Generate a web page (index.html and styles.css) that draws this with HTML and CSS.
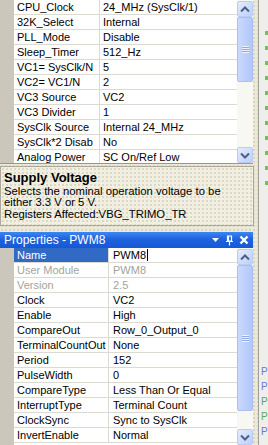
FILE: index.html
```html
<!DOCTYPE html>
<html lang="en">
<head>
  <meta charset="UTF-8">
  <title>Properties - PWM8</title>
  <link rel="stylesheet" href="styles.css">
</head>
<body>

  <div class="layout">
    <div class="main">

      <!-- Global resources grid -->
      <div class="panel top-panel">
        <div class="grid">
          <div class="row"><span class="name">CPU_Clock</span><span class="value">24_MHz (SysClk/1)</span></div>
          <div class="row"><span class="name">32K_Select</span><span class="value">Internal</span></div>
          <div class="row"><span class="name">PLL_Mode</span><span class="value">Disable</span></div>
          <div class="row"><span class="name">Sleep_Timer</span><span class="value">512_Hz</span></div>
          <div class="row"><span class="name">VC1= SysClk/N</span><span class="value">5</span></div>
          <div class="row"><span class="name">VC2= VC1/N</span><span class="value">2</span></div>
          <div class="row"><span class="name">VC3 Source</span><span class="value">VC2</span></div>
          <div class="row"><span class="name">VC3 Divider</span><span class="value">1</span></div>
          <div class="row"><span class="name">SysClk Source</span><span class="value">Internal 24_MHz</span></div>
          <div class="row"><span class="name">SysClk*2 Disab</span><span class="value">No</span></div>
          <div class="row"><span class="name">Analog Power</span><span class="value">SC On/Ref Low</span></div>
        </div>
        <div class="vscroll">
          <div class="sbtn"><svg width="10" height="7" viewBox="0 0 10 7"><path d="M1 5.5 L5 1.5 L9 5.5" fill="none" stroke="#4d6185" stroke-width="2"/></svg></div>
          <div class="thumb top-thumb"><span class="grip"></span></div>
          <div class="track"></div>
          <div class="sbtn"><svg width="10" height="7" viewBox="0 0 10 7"><path d="M1 1.5 L5 5.5 L9 1.5" fill="none" stroke="#4d6185" stroke-width="2"/></svg></div>
        </div>
      </div>

      <!-- Description -->
      <div class="desc">
        <div class="desc-title">Supply Voltage</div>
        <div class="desc-text">Selects the nominal operation voltage to be<br>either 3.3 V or 5 V.</div>
        <div class="desc-text">Registers Affected:VBG_TRIMO_TR</div>
      </div>

      <!-- Properties window -->
      <div class="titlebar">
        <span class="title">Properties - PWM8</span>
        <span class="title-icons">
          <svg width="9" height="6" viewBox="0 0 9 6"><path d="M1 1 L8 1 L4.5 5 Z" fill="#fff"/></svg>
          <svg width="9" height="11" viewBox="0 0 9 11"><path d="M2.5 1 H6.5 V6 H2.5 Z M3.5 1 V6 M1 6.5 H8 M4.5 7 V10.5" fill="none" stroke="#fff" stroke-width="1.2"/></svg>
          <svg width="10" height="10" viewBox="0 0 10 10"><path d="M1.5 1.5 L8.5 8.5 M8.5 1.5 L1.5 8.5" stroke="#fff" stroke-width="2.4"/></svg>
        </span>
      </div>

      <div class="panel bottom-panel">
        <div class="grid wide">
          <div class="row"><span class="name selected">Name</span><span class="value">PWM8<span class="caret"></span></span></div>
          <div class="row muted"><span class="name">User Module</span><span class="value">PWM8</span></div>
          <div class="row muted"><span class="name">Version</span><span class="value">2.5</span></div>
          <div class="row"><span class="name">Clock</span><span class="value">VC2</span></div>
          <div class="row"><span class="name">Enable</span><span class="value">High</span></div>
          <div class="row"><span class="name">CompareOut</span><span class="value">Row_0_Output_0</span></div>
          <div class="row"><span class="name">TerminalCountOut</span><span class="value">None</span></div>
          <div class="row"><span class="name">Period</span><span class="value">152</span></div>
          <div class="row"><span class="name">PulseWidth</span><span class="value">0</span></div>
          <div class="row"><span class="name">CompareType</span><span class="value">Less Than Or Equal</span></div>
          <div class="row"><span class="name">InterruptType</span><span class="value">Terminal Count</span></div>
          <div class="row"><span class="name">ClockSync</span><span class="value">Sync to SysClk</span></div>
          <div class="row"><span class="name">InvertEnable</span><span class="value">Normal</span></div>
        </div>
        <div class="vscroll">
          <div class="sbtn"><svg width="10" height="7" viewBox="0 0 10 7"><path d="M1 5.5 L5 1.5 L9 5.5" fill="none" stroke="#4d6185" stroke-width="2"/></svg></div>
          <div class="thumb bottom-thumb"><span class="grip"></span></div>
          <div class="track"></div>
          <div class="sbtn"><svg width="10" height="7" viewBox="0 0 10 7"><path d="M1 1.5 L5 5.5 L9 1.5" fill="none" stroke="#4d6185" stroke-width="2"/></svg></div>
        </div>
      </div>
    </div>

    <!-- Neighbouring window edge -->
    <div class="side">
      <div class="side-list">
        <i></i><i></i><i></i><i></i><i></i><i></i><i></i><i></i><i></i><i></i><i></i>
      </div>
      <div class="side-letters">
        <span class="blue">P</span><span class="blue">P</span><span class="green">P</span><span class="green">P</span><span class="blue">P</span>
      </div>
    </div>
  </div>

</body>
</html>
```

FILE: styles.css
```css
body {
  margin: 0;
  width: 268px;
  height: 445px;
  overflow: hidden;
  font-family: "Liberation Sans", Arial, sans-serif;
  font-size: 11px;
  color: #000;
  background-color: #ece9d8;
  background-image: radial-gradient(#d9d5c2 0.7px, transparent 0.9px);
  background-size: 4px 4px;
}

.layout {
  display: flex;
  height: 445px;
}

.main {
  width: 253px;
  display: flex;
  flex-direction: column;
}

/* property grid panels */
.panel {
  display: flex;
  background: #fff;
  overflow: hidden;
}

.top-panel {
  height: 163px;
  border-bottom: 1px solid #9a9789;
}

.bottom-panel {
  height: 197px;
}

.grid {
  width: 237px;
  background: linear-gradient(to right, #cbc7bd 14px, #fff 14px);
}

.row {
  display: flex;
  height: 14px;
  line-height: 14px;
  margin-left: 14px;
  border-bottom: 1px solid #dcdad2;
  white-space: nowrap;
}

.name {
  width: 82px;
  padding-left: 3px;
  border-right: 1px solid #dcdad2;
  overflow: hidden;
}

.wide .name {
  width: 91px;
}

.value {
  flex: 1;
  padding-left: 3px;
  overflow: hidden;
}

.wide .value {
  padding-left: 4px;
}

.name.selected {
  background: #316ac5;
  color: #fff;
}

.muted {
  color: #a4a39c;
}

.caret {
  display: inline-block;
  width: 1px;
  height: 12px;
  background: #000;
  vertical-align: -2px;
  margin-left: 1px;
}

/* XP style scrollbar */
.vscroll {
  width: 16px;
  padding-top: 1px;
  display: flex;
  flex-direction: column;
  background: #f8f8f3;
}

.sbtn {
  height: 14px;
  border: 1px solid #bccbf2;
  border-radius: 2px;
  background: linear-gradient(135deg, #e4ecfe, #bcd0fb);
  display: flex;
  align-items: center;
  justify-content: center;
}

.thumb {
  border: 1px solid #a9bff2;
  border-radius: 2px;
  background: linear-gradient(to right, #cbdafc, #b9cefb 60%, #b2c8fa);
  display: flex;
  align-items: center;
  justify-content: center;
}

.top-thumb {
  height: 63px;
}

.bottom-thumb {
  height: 144px;
}

.grip {
  width: 7px;
  height: 7px;
  background: repeating-linear-gradient(to bottom, #eef3ff 0 1px, #8fa9e6 1px 2px);
}

.track {
  flex: 1;
}

/* description box */
.desc {
  width: 246px;
  height: 51px;
  margin-top: 2px;
  padding: 4px 3px 3px 3px;
  border: 1px solid #aca899;
  background-color: #f1efe2;
  background-image: radial-gradient(#dcd8c4 0.7px, transparent 0.9px);
  background-size: 4px 4px;
}

.desc-title {
  font-size: 13px;
  font-weight: bold;
  line-height: 14px;
}

.desc-text {
  font-size: 11.3px;
  line-height: 11px;
  margin-top: 1px;
  white-space: nowrap;
}

/* tool window title */
.titlebar {
  height: 16px;
  margin-top: 6px;
  display: flex;
  align-items: center;
  justify-content: space-between;
  padding: 0 4px 0 4px;
  background: linear-gradient(to bottom, #3d86f2, #1f62dd 45%, #1658d6);
  color: #fff;
  font-size: 12px;
}

.title-icons {
  display: flex;
  align-items: center;
  gap: 5px;
}

/* edge of the next window */
.side {
  margin-left: 5px;
  flex: 1;
  border-left: 1px solid #9f9e98;
  background: #eeeeea;
  display: flex;
  flex-direction: column;
  justify-content: space-between;
  overflow: hidden;
}

.side-list {
  display: flex;
  flex-direction: column;
  align-items: flex-end;
  gap: 11px;
  padding-top: 31px;
}

.side-list i {
  width: 3px;
  height: 4px;
  background: #7ab86a;
}

.side-letters {
  display: flex;
  flex-direction: column;
  padding: 0 0 6px 2px;
  font-size: 10px;
  line-height: 15px;
}

.blue {
  color: #6a78d8;
}

.green {
  color: #5aa85a;
}
```
